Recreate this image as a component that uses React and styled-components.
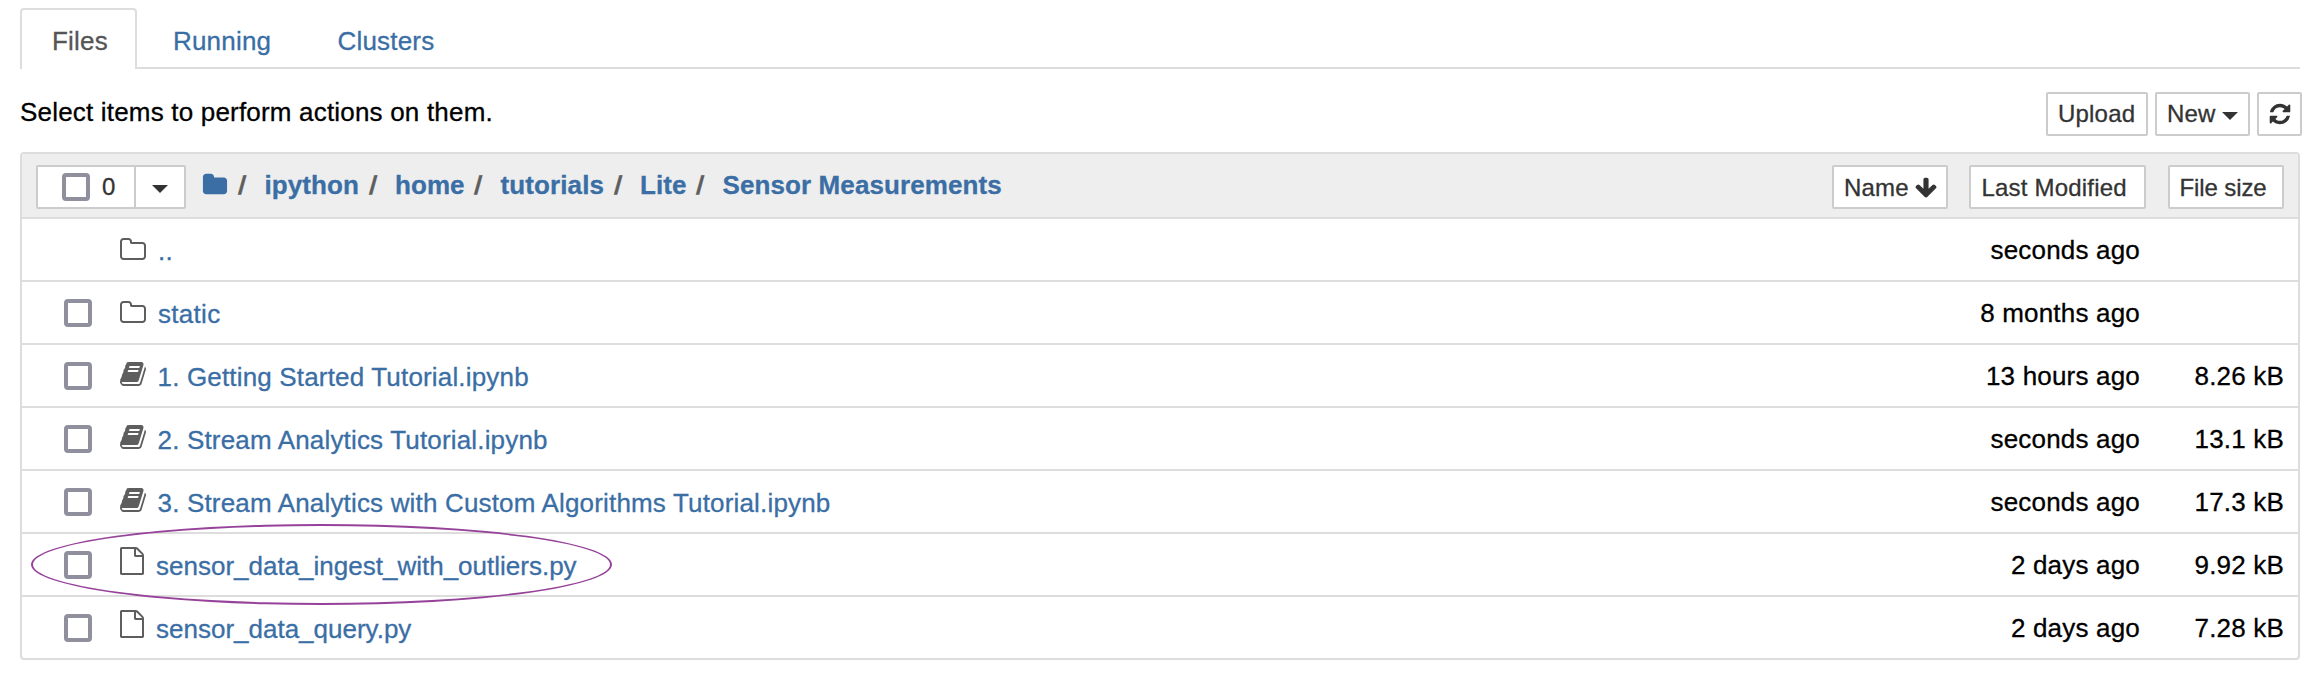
import React from "react";
import styled, { createGlobalStyle } from "styled-components";

const line = "#dddddd";
const link = "#3a6ea5";

const GlobalStyle = createGlobalStyle`
  *, *::before, *::after { box-sizing: border-box; }
  body {
    margin: 0;
    background: #fff;
    color: #000;
    font-family: "Liberation Sans", Arial, sans-serif;
    font-size: 26px;
    line-height: 36px;
    letter-spacing: 0.19px;
    -webkit-text-stroke: 0.3px currentColor;
  }
  a { color: inherit; text-decoration: none; }
  svg { display: block; flex: none; }
`;

const Page = styled.main`
  width: 2316px;
  height: 676px;
  padding: 8px 14px 0 20px;
  overflow: hidden;
`;

const Tabs = styled.nav`
  display: flex;
  gap: 4px;
  width: 2280px;
  height: 61px;
  border-bottom: 2px solid ${line};
`;

const Tab = styled.a`
  width: ${(p) => p.$width}px;
  height: ${(p) => (p.$active ? 61 : 59)}px;
  padding: 13px 0 0 30px;
  border: 2px solid ${(p) => (p.$active ? line : "transparent")};
  border-bottom: 0;
  border-radius: 4px 4px 0 0;
  background: #fff;
  color: ${(p) => (p.$active ? "#555" : link)};
`;

const Toolbar = styled.div`
  display: flex;
  justify-content: space-between;
  height: 83px;
  padding-top: 23px;
`;

const Hint = styled.p`
  margin: 2px 0 0;
`;

const Actions = styled.div`
  display: flex;
  gap: 7px;
`;

const Button = styled.button`
  display: flex;
  align-items: center;
  gap: ${(p) => p.$gap || 0}px;
  width: ${(p) => p.$width}px;
  height: 44px;
  padding: 0 0 0 ${(p) => p.$pad ?? 10}px;
  border: 2px solid #ccc;
  border-radius: 2px;
  background: #fff;
  color: #333;
  font: 24px/36px "Liberation Sans", Arial, sans-serif;
  letter-spacing: ${(p) => p.$spacing ?? 0.2}px;
  white-space: nowrap;
`;

const SortButton = styled(Button)`
  padding-top: 1px;
`;

const Caret = styled.span`
  border-top: 8px solid #333;
  border-left: 8px solid transparent;
  border-right: 8px solid transparent;
  margin-top: 4px;
`;

const List = styled.section`
  width: 2280px;
  border: 2px solid ${line};
  border-radius: 4px;
`;

const ListHeader = styled.header`
  display: flex;
  justify-content: space-between;
  height: 65px;
  padding: 11px 14px 0;
  border-bottom: 2px solid ${line};
  background: #eee;
`;

const HeaderLeft = styled.div`
  display: flex;
`;

const Selector = styled.div`
  display: flex;
  & > * + * { margin-left: -2px; }
`;

const Checkbox = styled.span`
  flex: none;
  width: 28px;
  height: 28px;
  border: 4px solid #8f8f9d;
  border-radius: 4px;
  background: #fff;
  visibility: ${(p) => (p.$hidden ? "hidden" : "visible")};
`;

const Crumbs = styled.div`
  display: flex;
  padding: 2px 0 0 16px;
  font-weight: bold;
  color: ${link};
  white-space: nowrap;
`;

const CrumbIcon = styled.span`
  padding: 5px 1px 0 0;
`;

const Slash = styled.span`
  padding: 0 19px 0 9px;
  color: #5e5e5e;
  transform: skewX(-5deg);
`;

const Crumb = styled.a`
  margin-right: 0.5px;
  letter-spacing: 0.1px;
`;

const SortButtons = styled.div`
  display: flex;
  & > :nth-child(2) { margin: 0 22px 0 21px; }
`;

const Row = styled.div`
  position: relative;
  display: flex;
  height: ${(p) => (p.$last ? 61 : 63)}px;
  padding: 0 14px 0 42px;
  border-bottom: ${(p) => (p.$last ? 0 : 2)}px solid ${line};
  & > ${Checkbox} { margin-top: 17px; }
`;

const RowIcon = styled.span`
  width: 28px;
  margin-left: ${(p) => p.$left}px;
  padding-top: ${(p) => p.$top}px;
  color: #5e5e5e;
`;

const FileName = styled.a`
  flex: 1;
  margin-left: ${(p) => p.$gap}px;
  padding-top: 14px;
  color: ${link};
  letter-spacing: ${(p) => p.$spacing}px;
`;

const Modified = styled.span`
  padding-top: 13px;
`;

const Size = styled.span`
  width: 144px;
  padding-top: 13px;
  text-align: right;
`;

const Highlight = styled.span`
  position: absolute;
  left: 9px;
  top: -10px;
  width: 581px;
  height: 81px;
  border: 2px solid #96429a;
  border-radius: 50%;
`;

const paths = {
  folder:
    "M1728 608v704q0 92-66 158t-158 66h-1216q-92 0-158-66t-66-158v-960q0-92 66-158t158-66h320q92 0 158 66t66 158v32h672q92 0 158 66t66 158z",
  folderOpenLine:
    "M1600 1312v-704q0-40-28-68t-68-28h-704q-40 0-68-28t-28-68v-64q0-40-28-68t-68-28h-320q-40 0-68 28t-28 68v960q0 40 28 68t68 28h1216q40 0 68-28t28-68zm128-704v704q0 92-66 158t-158 66h-1216q-92 0-158-66t-66-158v-960q0-92 66-158t158-66h320q92 0 158 66t66 158v32h672q92 0 158 66t66 158z",
  file:
    "M1596 380q28 28 48 76t20 88v1152q0 40-28 68t-68 28h-1344q-40 0-68-28t-28-68v-1600q0-40 28-68t68-28h896q40 0 88 20t76 48zm-444-244v376h376q-10-29-22-41l-313-313q-12-12-41-22zm384 1528v-1024h-416q-40 0-68-28t-28-68v-416h-768v1536h1280z",
  book:
    "M1703 478q40 57 18 129l-275 906q-19 64-76.5 107.5t-122.5 43.5h-923q-77 0-148.5-53.5t-99.5-131.5q-24-67-2-127 0-4 3-27t4-37q1-8-3-21.5t-3-19.5q2-11 8-21t16.5-23.5 16.5-23.5q23-38 45-91.5t30-91.5q3-10 .5-30t-.5-28q3-11 17-28t17-23q21-36 42-92t25-90q1-9-2.5-32t.5-28q4-13 22-30.5t22-22.5q19-26 42.5-84.5t27.5-96.5q1-8-3-25.5t-2-26.5q2-8 9-18t18-23 17-21q8-12 16.5-30.5t15-35 16-36 19.5-32 26.5-23.5 36-11.5 47.5 5.5l-1 3q38-9 51-9h761q74 0 114 56t18 130l-274 906q-36 119-71.5 153.5t-128.5 34.5h-869q-27 0-38 15-11 16-1 43 24 70 144 70h923q29 0 56-15.5t35-41.5l300-987q7-22 5-57 38 15 59 43zm-1064 2q-4 13 2 22.5t20 9.5h608q13 0 25.5-9.5t16.5-22.5l21-64q4-13-2-22.5t-20-9.5h-608q-13 0-25.5 9.5t-16.5 22.5zm-83 256q-4 13 2 22.5t20 9.5h608q13 0 25.5-9.5t16.5-22.5l21-64q4-13-2-22.5t-20-9.5h-608q-13 0-25.5 9.5t-16.5 22.5z",
  refresh:
    "M1639 1056q0 5-1 7-64 268-268 434.5t-478 166.5q-146 0-282.5-55t-243.5-157l-129 129q-19 19-45 19t-45-19-19-45v-448q0-26 19-45t45-19h448q26 0 45 19t19 45-19 45l-137 137q71 66 161 102t187 36q134 0 250-65t186-179q11-17 53-117 8-23 30-23h192q13 0 22.5 9.5t9.5 22.5zm25-800v448q0 26-19 45t-45 19h-448q-26 0-45-19t-19-45 19-45l138-138q-148-137-349-137-134 0-250 65t-186 179q-11 17-53 117-8 23-30 23h-199q-13 0-22.5-9.5t-9.5-22.5v-7q65-268 270-434.5t480-166.5q146 0 284 55.5t245 156.5l130-129q19-19 45-19t45 19 19 45z",
  arrowDown:
    "M1675 832q0 53-37 90l-651 652q-39 37-91 37-53 0-90-37l-651-652q-38-36-38-90 0-53 38-91l74-75q39-37 91-37 53 0 90 37l294 294v-704q0-52 38-90t90-38h128q52 0 90 38t38 90v704l294-294q37-37 90-37 52 0 91 37l75 75q37 39 37 91z",
};

const Icon = ({ name, size = 28 }) => (
  <svg width={size} height={size} viewBox="0 0 1792 1792" fill="currentColor">
    <path d={paths[name]} />
  </svg>
);

const kinds = {
  folderOpenLine: { left: 27, top: 17, gap: 11, spacing: 0.3 },
  book: { left: 27, top: 15, gap: 10.5, spacing: 0.17 },
  file: { left: 26, top: 13, gap: 10, spacing: 0 },
};

const crumbs = ["ipython", "home", "tutorials", "Lite", "Sensor Measurements"];

const files = [
  { icon: "folderOpenLine", name: "..", modified: "seconds ago", parent: true },
  { icon: "folderOpenLine", name: "static", modified: "8 months ago" },
  { icon: "book", name: "1. Getting Started Tutorial.ipynb", modified: "13 hours ago", size: "8.26 kB" },
  { icon: "book", name: "2. Stream Analytics Tutorial.ipynb", modified: "seconds ago", size: "13.1 kB" },
  { icon: "book", name: "3. Stream Analytics with Custom Algorithms Tutorial.ipynb", modified: "seconds ago", size: "17.3 kB" },
  { icon: "file", name: "sensor_data_ingest_with_outliers.py", modified: "2 days ago", size: "9.92 kB", marked: true },
  { icon: "file", name: "sensor_data_query.py", modified: "2 days ago", size: "7.28 kB" },
];

export default function App() {
  return (
    <Page>
      <GlobalStyle />
      <Tabs>
        <Tab $active $width={117}>Files</Tab>
        <Tab $width={160.5}>Running</Tab>
        <Tab $width={160}>Clusters</Tab>
      </Tabs>
      <Toolbar>
        <Hint>Select items to perform actions on them.</Hint>
        <Actions>
          <Button $width={102}>Upload</Button>
          <Button $width={95} $gap={6}>New<Caret /></Button>
          <Button $width={45} $pad={9}><Icon name="refresh" size={24} /></Button>
        </Actions>
      </Toolbar>
      <List>
        <ListHeader>
          <HeaderLeft>
            <Selector>
              <Button $width={100} $pad={24} $gap={12}><Checkbox />0</Button>
              <Button $width={52} $pad={16}><Caret /></Button>
            </Selector>
            <Crumbs>
              <CrumbIcon><Icon name="folder" size={26} /></CrumbIcon>
              {crumbs.map((crumb) => (
                <React.Fragment key={crumb}>
                  <Slash>/</Slash>
                  <Crumb>{crumb}</Crumb>
                </React.Fragment>
              ))}
            </Crumbs>
          </HeaderLeft>
          <SortButtons>
            <SortButton $width={116} $gap={5}>Name<Icon name="arrowDown" size={24} /></SortButton>
            <SortButton $width={177} $pad={10.5}>Last Modified</SortButton>
            <SortButton $width={116} $pad={9.5} $spacing={-0.1}>File size</SortButton>
          </SortButtons>
        </ListHeader>
        {files.map((file, i) => {
          const kind = kinds[file.icon];
          return (
            <Row key={file.name} $last={i === files.length - 1}>
              <Checkbox $hidden={file.parent} />
              <RowIcon $left={kind.left} $top={kind.top}>
                <Icon name={file.icon} />
              </RowIcon>
              <FileName $gap={kind.gap} $spacing={kind.spacing}>{file.name}</FileName>
              <Modified>{file.modified}</Modified>
              <Size>{file.size}</Size>
              {file.marked && <Highlight />}
            </Row>
          );
        })}
      </List>
    </Page>
  );
}
